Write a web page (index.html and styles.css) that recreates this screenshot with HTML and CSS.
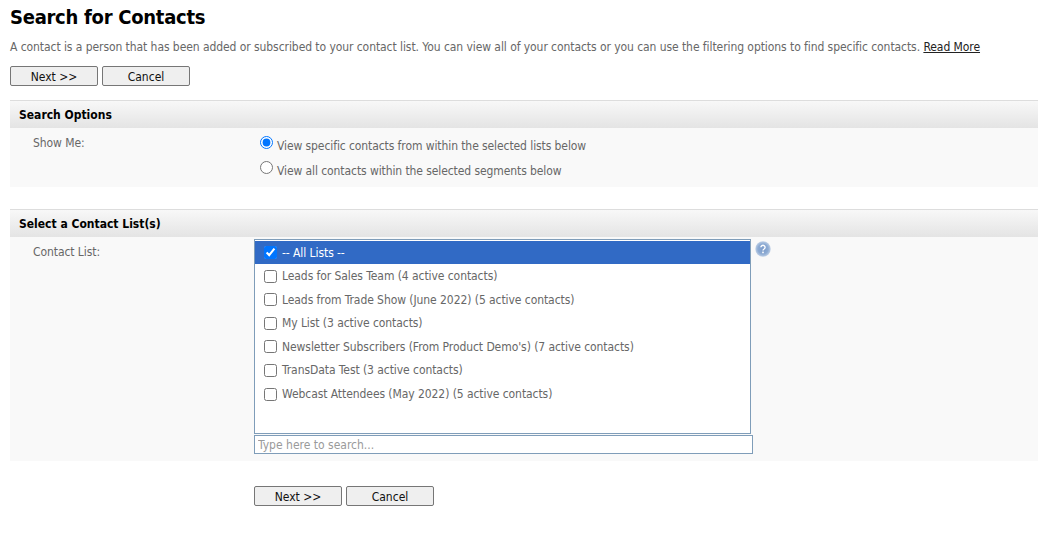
FILE: index.html
```html
<!DOCTYPE html>
<html lang="en">
<head>
<meta charset="utf-8">
<title>Search for Contacts</title>
<link rel="stylesheet" href="styles.css">
</head>
<body>
<main class="page">
  <h1 class="title">Search for Contacts</h1>
  <p class="intro">A contact is a person that has been added or subscribed to your contact list. You can view all of your contacts or you can use the filtering options to find specific contacts. <a href="#">Read More</a></p>
  <div class="buttons top-buttons">
    <button class="btn">Next &gt;&gt;</button>
    <button class="btn">Cancel</button>
  </div>

  <section class="panel options">
    <h2 class="panel-head">Search Options</h2>
    <div class="panel-body">
      <div class="label">Show Me:</div>
      <div class="radios">
        <label class="radio"><input type="radio" name="m" checked><span class="radio-text">View specific contacts from within the selected lists below</span></label>
        <label class="radio"><input type="radio" name="m"><span class="radio-text">View all contacts within the selected segments below</span></label>
      </div>
    </div>
  </section>

  <section class="panel lists">
    <h2 class="panel-head">Select a Contact List(s)</h2>
    <div class="panel-body">
      <div class="label">Contact List:</div>
      <div class="picker">
        <div class="listbox">
          <label class="item selected"><input type="checkbox" checked>-- All Lists --</label>
          <label class="item"><input type="checkbox">Leads for Sales Team (4 active contacts)</label>
          <label class="item"><input type="checkbox">Leads from Trade Show (June 2022) (5 active contacts)</label>
          <label class="item"><input type="checkbox">My List (3 active contacts)</label>
          <label class="item"><input type="checkbox">Newsletter Subscribers (From Product Demo's) (7 active contacts)</label>
          <label class="item"><input type="checkbox">TransData Test (3 active contacts)</label>
          <label class="item"><input type="checkbox">Webcast Attendees (May 2022) (5 active contacts)</label>
        </div>
        <input class="search" type="text" placeholder="Type here to search...">
      </div>
      <svg class="help" width="16" height="16" viewBox="0 0 16 16" aria-hidden="true">
        <defs>
          <radialGradient id="g" cx="0.5" cy="0.5" r="0.55"><stop offset="0" stop-color="#7b9bca"/><stop offset="0.6" stop-color="#8dabd3"/><stop offset="1" stop-color="#cbd9eb"/></radialGradient>
        </defs>
        <circle cx="8" cy="8" r="7.7" fill="url(#g)"/>
        <path d="M5.9 6.3a2.1 2 0 1 1 3.2 1.7c-.7.4-1.1.8-1.1 1.6" fill="none" stroke="#fff" stroke-width="1.4"/>
        <rect x="7.2" y="10.6" width="1.6" height="1.6" fill="#fff"/>
      </svg>
    </div>
  </section>

  <div class="buttons bottom-buttons">
    <button class="btn">Next &gt;&gt;</button>
    <button class="btn">Cancel</button>
  </div>
</main>
</body>
</html>
```

FILE: styles.css
```css
* { box-sizing: border-box; }
html, body { margin: 0; background: #fff; }
body { font-family: "DejaVu Sans Condensed", "DejaVu Sans", sans-serif; font-size: 12px; letter-spacing: -0.07px; color: #676767; height: 537px; overflow: hidden; }
.page { padding: 0 13px 0 10px; }
.title { margin: 0; padding-top: 5px; height: 35px; font-size: 20px; line-height: 25px; font-weight: 700; letter-spacing: -0.27px; color: #000; }
.intro { margin: 0; padding-top: 1px; height: 26px; line-height: 23px; white-space: nowrap; }
.intro a { color: #222; text-decoration: underline; }
.buttons { display: flex; gap: 4px; }
.btn { width: 88px; height: 20px; padding: 2px 0 0; font: 12px "DejaVu Sans Condensed", "DejaVu Sans", sans-serif; color: #111; background: #efefef; border: 1px solid #767676; border-radius: 2px; }
.top-buttons { margin-top: 5px; }
.panel-head { margin: 0; height: 28px; padding-left: 9px; font-size: 12px; line-height: 28px; font-weight: 700; letter-spacing: 0; color: #000; border-top: 1px solid #ddd; background: linear-gradient(#f8f8f8, #e4e4e4); }
.panel-body { display: flex; background: #f9f9f9; }
.label { width: 244px; padding-left: 23px; }
.options { margin-top: 14px; }
.options .panel-body { height: 59px; }
.options .label { padding-top: 6px; line-height: 18px; }
.radios { display: flex; flex-direction: column; padding-top: 6px; gap: 7px; margin-left: 6px; }
.radio { display: flex; align-items: center; height: 18px; line-height: 18px; }
.radio input { width: 13px; height: 13px; margin: 0 4px 0 0; position: relative; top: -1px; }
.radio-text { padding-top: 7px; line-height: 15px; letter-spacing: -0.09px; }
.lists { margin-top: 22px; }
.lists .panel-body { height: 224px; }
.lists .label { padding-top: 6px; line-height: 18px; }
.picker { width: 499px; padding-top: 2px; }
.listbox { width: 497px; height: 195px; border: 1px solid #7f9db9; background: #fff; padding: 1px 0 0; }
.item { display: flex; align-items: center; height: 23.6px; padding-left: 9px; }
.item input { width: 13px; height: 13px; margin: 0 5px 0 0; }
.item.selected { height: 23.3px; background: #316ac5; color: #fff; }
.search { display: block; width: 499px; height: 19px; margin-top: 1px; padding: 0 3px; font: 12px "DejaVu Sans Condensed", "DejaVu Sans", sans-serif; border: 1px solid #7f9db9; border-radius: 0; background: #fff; }
.search::placeholder { color: #9a9a9a; opacity: 1; }
.help { margin: 4px 0 0 2px; }
.bottom-buttons { margin: 25px 0 0 244px; }
```
